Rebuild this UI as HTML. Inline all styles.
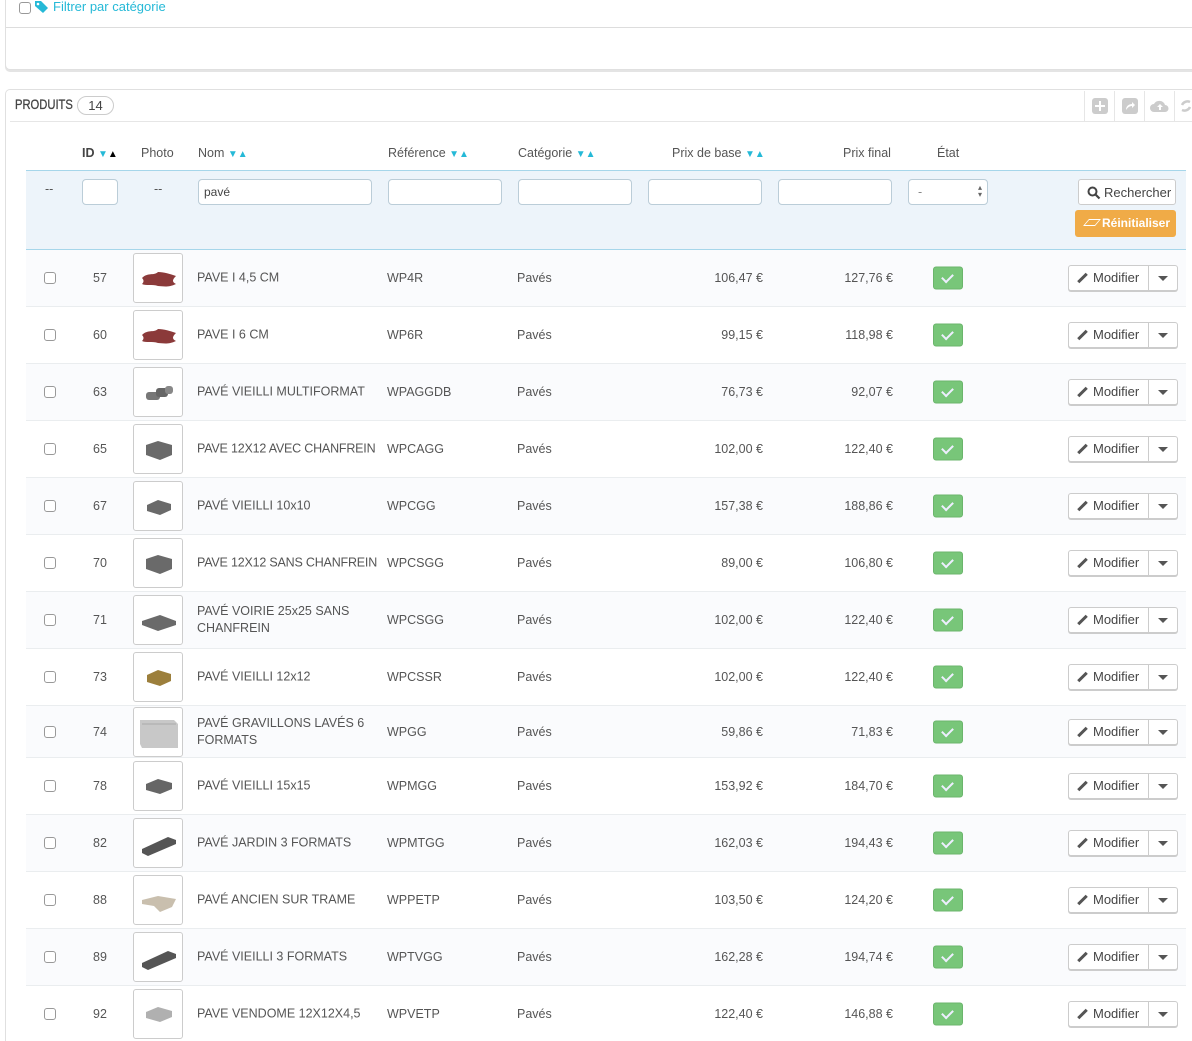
<!DOCTYPE html>
<html style="overflow:hidden;height:1041px"><head><meta charset="utf-8">
<style>
*{box-sizing:border-box;margin:0;padding:0}
body{width:1192px;height:1041px;overflow:hidden;background:#fff;font-family:"Liberation Sans",sans-serif;font-size:12.5px;color:#555;position:relative}
.a{position:absolute}
.p1{left:5px;top:-10px;width:1200px;height:80px;border:1px solid #e0e0e0;border-radius:5px;box-shadow:0 2px 0 #e4e4e4;background:#fff}
.p2{left:5px;top:89px;width:1200px;height:952px;border:1px solid #e0e0e0;border-bottom:0;border-radius:5px 5px 0 0;background:#fff}
.cb{width:12px;height:12px;border:1px solid #999;border-radius:3px;background:#fff}
.hd{top:146px;font-size:12.5px;color:#555}
.tri{color:#25b9d7;font-size:10px}
.inp{height:26px;border:1px solid #bbcdd8;border-radius:4px;background:#fff;top:179px}
.r{position:absolute;left:26px;width:1160px;border-bottom:1px solid #eaedef}
.r.o{background:#fafbfd}
.r>*{position:absolute;top:50%;transform:translateY(-50%)}
.ph{left:107px;width:50px;height:50px;border:1px solid #ccc;border-radius:3px;background:#fff}
.ph svg{position:absolute;left:0;top:0}
.ok{left:907px;width:30px;height:23px;background:#78c679;border:1px solid #6bb56c;border-radius:3px}
.ok:after{content:"";position:absolute;left:10px;top:4px;width:5px;height:9px;border:solid #eef;border-width:0 2.5px 2.5px 0;transform:rotate(45deg)}
.bt{left:1042px;width:110px;height:26px;border:1px solid #ccc;border-radius:3px;background:#fff;box-shadow:0 1px 0 #ccc;font-size:13px;color:#444}
.bt .m{position:absolute;left:24px;top:4px}
.bt .s{position:absolute;left:79px;top:0;width:1px;height:24px;background:#ccc}
.bt .d{position:absolute;left:89px;top:10px;border:5px solid transparent;border-top:5px solid #555;border-bottom:0}
.bt .pen{position:absolute;left:12px;top:6px;width:3px;height:12px;background:#555;transform:rotate(45deg)}
.nm{left:171px;line-height:17px;white-space:nowrap}
.rg{text-align:right}
</style></head><body>
<div class="a p1"></div>
<div class="a cb" style="left:19px;top:2px"></div>
<svg class="a" style="left:34px;top:0" width="16" height="14" viewBox="0 0 16 14"><path d="M1 1h6l7 7-5 5-8-7z" fill="#25b9d7"/><circle cx="4" cy="4" r="1.3" fill="#fff"/></svg>
<div class="a" style="left:53px;top:-1px;color:#25b9d7;font-size:13px">Filtrer par catégorie</div>
<div class="a" style="left:6px;top:27px;width:1190px;height:1px;background:#ddd"></div>

<div class="a p2"></div>
<div class="a" style="left:15px;top:96px;font-size:14px;color:#444;transform:scaleX(.8);transform-origin:0 0;-webkit-text-stroke:.3px #444">PRODUITS</div>
<div class="a" style="left:77px;top:96px;width:37px;height:19px;border:1px solid #ccc;border-radius:10px;text-align:center;font-size:13px;line-height:17px;color:#444">14</div>
<div class="a" style="left:10px;top:121px;width:1190px;height:1px;background:#e6e6e6"></div>
<div class="a" style="left:1084px;top:91px;width:1px;height:30px;background:#e6e6e6"></div>
<div class="a" style="left:1114px;top:91px;width:1px;height:30px;background:#e6e6e6"></div>
<div class="a" style="left:1144px;top:91px;width:1px;height:30px;background:#e6e6e6"></div>
<div class="a" style="left:1174px;top:91px;width:1px;height:30px;background:#e6e6e6"></div>
<div class="a" style="left:1092px;top:98px;width:16px;height:16px;background:#ccc;border-radius:3px"><div class="a" style="left:3px;top:7px;width:10px;height:2px;background:#fff"></div><div class="a" style="left:7px;top:3px;width:2px;height:10px;background:#fff"></div></div>
<div class="a" style="left:1122px;top:98px;width:16px;height:16px;background:#ccc;border-radius:3px"><svg width="16" height="16"><path d="M4 12c0-4 3-6 6-6V4l3 3-3 3V8c-2 0-4 1-6 4z" fill="#fff"/></svg></div>
<svg class="a" style="left:1150px;top:98px" width="20" height="16"><path d="M4 14a4 4 0 010-8 6 6 0 0111 1 3.5 3.5 0 010 7z" fill="#ccc"/><path d="M10 6l-3 3h2v3h2V9h2z" fill="#fff"/></svg>
<svg class="a" style="left:1180px;top:98px" width="12" height="16"><path d="M10 4a6 6 0 00-8 3M2 12a6 6 0 008-3" stroke="#ccc" stroke-width="2.5" fill="none"/></svg>

<div class="a hd" style="left:82px;font-weight:bold;color:#444">ID <span class="tri">▼</span><span style="font-size:10px;color:#000">▲</span></div>
<div class="a hd" style="left:141px">Photo</div>
<div class="a hd" style="left:198px">Nom <span class="tri">▼▲</span></div>
<div class="a hd" style="left:388px">Référence <span class="tri">▼▲</span></div>
<div class="a hd" style="left:518px">Catégorie <span class="tri">▼▲</span></div>
<div class="a hd" style="left:672px">Prix de base <span class="tri">▼▲</span></div>
<div class="a hd" style="left:843px">Prix final</div>
<div class="a hd" style="left:937px">État</div>

<div class="a" style="left:26px;top:170px;width:1160px;height:80px;background:#edf4fa;border-top:1px solid #a6d6ea;border-bottom:1px solid #a6d6ea"></div>
<div class="a" style="left:45px;top:182px">--</div>
<div class="a" style="left:154px;top:182px">--</div>
<div class="a inp" style="left:82px;width:36px"></div>
<div class="a inp" style="left:198px;width:174px;padding:5px 5px;font-size:12px;color:#444">pavé</div>
<div class="a inp" style="left:388px;width:114px"></div>
<div class="a inp" style="left:518px;width:114px"></div>
<div class="a inp" style="left:648px;width:114px"></div>
<div class="a inp" style="left:778px;width:114px"></div>
<div class="a inp" style="left:908px;width:80px;padding:5px 9px;color:#888">-<span style="position:absolute;right:5px;top:4px;font-size:8px;line-height:7px;color:#666">▴<br>▾</span></div>
<div class="a" style="left:1078px;top:179px;width:98px;height:26px;border:1px solid #ccc;border-radius:3px;background:#fff;font-size:13px;color:#444;padding:5px 0 0 25px">Rechercher
<svg class="a" style="left:8px;top:6px" width="14" height="14"><circle cx="5.5" cy="5.5" r="4" stroke="#444" stroke-width="2" fill="none"/><path d="M8.5 8.5l4 4" stroke="#444" stroke-width="2.2"/></svg></div>
<div class="a" style="left:1075px;top:210px;width:101px;height:27px;border-radius:3px;background:#f0ab47;color:#fff;font-weight:bold;font-size:12px;padding:6px 0 0 27px">Réinitialiser
<div class="a" style="left:11px;top:9px;width:12px;height:7px;border:1.5px solid #fff;transform:skewX(-40deg)"></div></div>

<!-- rows -->
<div class="r o" style="top:250px;height:57px"><div class="cb" style="left:18px"></div><span style="left:67px">57</span><div class="ph"><svg width="50" height="50"><path d="M8 24c6-6 12-2 16-6 6 0 12 2 18 4-4 4-4 6 0 8-8 4-14 2-18 2-6-2-12 0-16-2 2-2 2-4 0-6z" fill="#8b3a3a"/></svg></div><span class="nm">PAVE I 4,5 CM</span><span style="left:361px">WP4R</span><span style="left:491px">Pavés</span><span class="rg" style="left:614px;width:123px">106,47 €</span><span class="rg" style="left:744px;width:123px">127,76 €</span><div class="ok"></div><div class="bt"><i class="pen"></i><span class="m">Modifier</span><i class="s"></i><i class="d"></i></div></div>
<div class="r" style="top:307px;height:57px"><div class="cb" style="left:18px"></div><span style="left:67px">60</span><div class="ph"><svg width="50" height="50"><path d="M8 24c6-6 12-2 16-6 6 0 12 2 18 4-4 4-4 6 0 8-8 4-14 2-18 2-6-2-12 0-16-2 2-2 2-4 0-6z" fill="#8b3a3a"/></svg></div><span class="nm">PAVE I 6 CM</span><span style="left:361px">WP6R</span><span style="left:491px">Pavés</span><span class="rg" style="left:614px;width:123px">99,15 €</span><span class="rg" style="left:744px;width:123px">118,98 €</span><div class="ok"></div><div class="bt"><i class="pen"></i><span class="m">Modifier</span><i class="s"></i><i class="d"></i></div></div>
<div class="r o" style="top:364px;height:57px"><div class="cb" style="left:18px"></div><span style="left:67px">63</span><div class="ph"><svg width="50" height="50"><rect x="12" y="24" width="14" height="8" rx="3" fill="#777"/><rect x="22" y="20" width="12" height="9" rx="3" fill="#666"/><rect x="31" y="18" width="8" height="8" rx="3" fill="#888"/></svg></div><span class="nm">PAVÉ VIEILLI MULTIFORMAT</span><span style="left:361px">WPAGGDB</span><span style="left:491px">Pavés</span><span class="rg" style="left:614px;width:123px">76,73 €</span><span class="rg" style="left:744px;width:123px">92,07 €</span><div class="ok"></div><div class="bt"><i class="pen"></i><span class="m">Modifier</span><i class="s"></i><i class="d"></i></div></div>
<div class="r" style="top:421px;height:57px"><div class="cb" style="left:18px"></div><span style="left:67px">65</span><div class="ph"><svg width="50" height="50"><path d="M12 20l12-4 14 4v10l-12 5-14-5z" fill="#6a6a6a"/></svg></div><span class="nm" style="letter-spacing:-.2px">PAVE 12X12 AVEC CHANFREIN</span><span style="left:361px">WPCAGG</span><span style="left:491px">Pavés</span><span class="rg" style="left:614px;width:123px">102,00 €</span><span class="rg" style="left:744px;width:123px">122,40 €</span><div class="ok"></div><div class="bt"><i class="pen"></i><span class="m">Modifier</span><i class="s"></i><i class="d"></i></div></div>
<div class="r o" style="top:478px;height:57px"><div class="cb" style="left:18px"></div><span style="left:67px">67</span><div class="ph"><svg width="50" height="50"><path d="M13 23l11-5 13 4v6l-11 5-13-4z" fill="#6a6a6a"/></svg></div><span class="nm">PAVÉ VIEILLI 10x10</span><span style="left:361px">WPCGG</span><span style="left:491px">Pavés</span><span class="rg" style="left:614px;width:123px">157,38 €</span><span class="rg" style="left:744px;width:123px">188,86 €</span><div class="ok"></div><div class="bt"><i class="pen"></i><span class="m">Modifier</span><i class="s"></i><i class="d"></i></div></div>
<div class="r" style="top:535px;height:57px"><div class="cb" style="left:18px"></div><span style="left:67px">70</span><div class="ph"><svg width="50" height="50"><path d="M12 20l12-4 14 4v10l-12 5-14-5z" fill="#6a6a6a"/></svg></div><span class="nm" style="letter-spacing:-.2px">PAVE 12X12 SANS CHANFREIN</span><span style="left:361px">WPCSGG</span><span style="left:491px">Pavés</span><span class="rg" style="left:614px;width:123px">89,00 €</span><span class="rg" style="left:744px;width:123px">106,80 €</span><div class="ok"></div><div class="bt"><i class="pen"></i><span class="m">Modifier</span><i class="s"></i><i class="d"></i></div></div>
<div class="r o" style="top:592px;height:57px"><div class="cb" style="left:18px"></div><span style="left:67px">71</span><div class="ph"><svg width="50" height="50"><path d="M8 25l18-6 16 6v4l-18 6-16-6z" fill="#6a6a6a"/></svg></div><span class="nm">PAVÉ VOIRIE 25x25 SANS<br>CHANFREIN</span><span style="left:361px">WPCSGG</span><span style="left:491px">Pavés</span><span class="rg" style="left:614px;width:123px">102,00 €</span><span class="rg" style="left:744px;width:123px">122,40 €</span><div class="ok"></div><div class="bt"><i class="pen"></i><span class="m">Modifier</span><i class="s"></i><i class="d"></i></div></div>
<div class="r" style="top:649px;height:57px"><div class="cb" style="left:18px"></div><span style="left:67px">73</span><div class="ph"><svg width="50" height="50"><path d="M13 22l11-5 13 4v7l-11 5-13-4z" fill="#9c7f3c"/></svg></div><span class="nm">PAVÉ VIEILLI 12x12</span><span style="left:361px">WPCSSR</span><span style="left:491px">Pavés</span><span class="rg" style="left:614px;width:123px">102,00 €</span><span class="rg" style="left:744px;width:123px">122,40 €</span><div class="ok"></div><div class="bt"><i class="pen"></i><span class="m">Modifier</span><i class="s"></i><i class="d"></i></div></div>
<div class="r o" style="top:706px;height:52px"><div class="cb" style="left:18px"></div><span style="left:67px">74</span><div class="ph"><svg width="50" height="50"><path d="M6 12h34l4 4v24H8l-2-4z" fill="#c8c8c8"/><path d="M8 16h34" stroke="#aaa"/></svg></div><span class="nm">PAVÉ GRAVILLONS LAVÉS 6<br>FORMATS</span><span style="left:361px">WPGG</span><span style="left:491px">Pavés</span><span class="rg" style="left:614px;width:123px">59,86 €</span><span class="rg" style="left:744px;width:123px">71,83 €</span><div class="ok"></div><div class="bt"><i class="pen"></i><span class="m">Modifier</span><i class="s"></i><i class="d"></i></div></div>
<div class="r" style="top:758px;height:57px"><div class="cb" style="left:18px"></div><span style="left:67px">78</span><div class="ph"><svg width="50" height="50"><path d="M12 22l12-5 14 4v6l-12 5-14-4z" fill="#666"/></svg></div><span class="nm">PAVÉ VIEILLI 15x15</span><span style="left:361px">WPMGG</span><span style="left:491px">Pavés</span><span class="rg" style="left:614px;width:123px">153,92 €</span><span class="rg" style="left:744px;width:123px">184,70 €</span><div class="ok"></div><div class="bt"><i class="pen"></i><span class="m">Modifier</span><i class="s"></i><i class="d"></i></div></div>
<div class="r o" style="top:815px;height:57px"><div class="cb" style="left:18px"></div><span style="left:67px">82</span><div class="ph"><svg width="50" height="50"><path d="M8 30l26-12 8 3v4L14 37l-6-3z" fill="#555"/></svg></div><span class="nm">PAVÉ JARDIN 3 FORMATS</span><span style="left:361px">WPMTGG</span><span style="left:491px">Pavés</span><span class="rg" style="left:614px;width:123px">162,03 €</span><span class="rg" style="left:744px;width:123px">194,43 €</span><div class="ok"></div><div class="bt"><i class="pen"></i><span class="m">Modifier</span><i class="s"></i><i class="d"></i></div></div>
<div class="r" style="top:872px;height:57px"><div class="cb" style="left:18px"></div><span style="left:67px">88</span><div class="ph"><svg width="50" height="50"><path d="M8 24l16-4 18 3-4 8-12 5-6-6-12-2z" fill="#c9bfae"/></svg></div><span class="nm">PAVÉ ANCIEN SUR TRAME</span><span style="left:361px">WPPETP</span><span style="left:491px">Pavés</span><span class="rg" style="left:614px;width:123px">103,50 €</span><span class="rg" style="left:744px;width:123px">124,20 €</span><div class="ok"></div><div class="bt"><i class="pen"></i><span class="m">Modifier</span><i class="s"></i><i class="d"></i></div></div>
<div class="r o" style="top:929px;height:57px"><div class="cb" style="left:18px"></div><span style="left:67px">89</span><div class="ph"><svg width="50" height="50"><path d="M8 30l26-12 8 3v4L14 37l-6-3z" fill="#555"/></svg></div><span class="nm">PAVÉ VIEILLI 3 FORMATS</span><span style="left:361px">WPTVGG</span><span style="left:491px">Pavés</span><span class="rg" style="left:614px;width:123px">162,28 €</span><span class="rg" style="left:744px;width:123px">194,74 €</span><div class="ok"></div><div class="bt"><i class="pen"></i><span class="m">Modifier</span><i class="s"></i><i class="d"></i></div></div>
<div class="r" style="top:986px;height:57px"><div class="cb" style="left:18px"></div><span style="left:67px">92</span><div class="ph"><svg width="50" height="50"><path d="M12 22l12-5 14 4v6l-12 5-14-4z" fill="#b0b0b0"/></svg></div><span class="nm">PAVE VENDOME 12X12X4,5</span><span style="left:361px">WPVETP</span><span style="left:491px">Pavés</span><span class="rg" style="left:614px;width:123px">122,40 €</span><span class="rg" style="left:744px;width:123px">146,88 €</span><div class="ok"></div><div class="bt"><i class="pen"></i><span class="m">Modifier</span><i class="s"></i><i class="d"></i></div></div>
</body></html>
